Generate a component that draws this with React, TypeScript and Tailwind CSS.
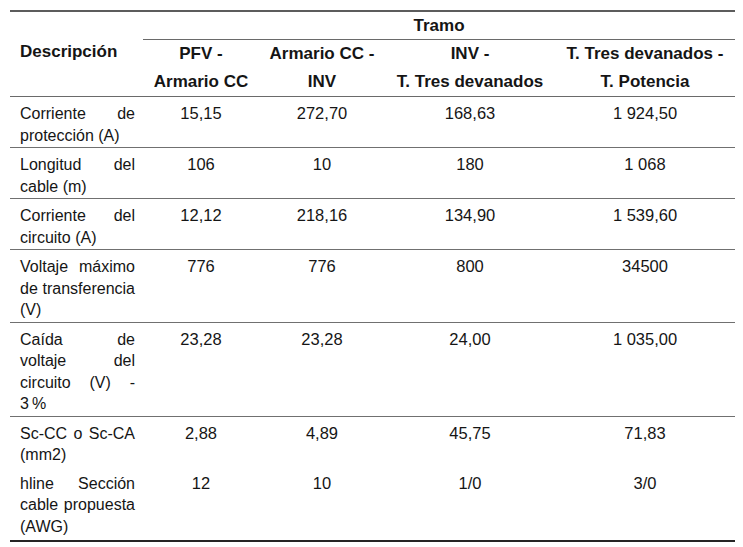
/* Tabla de cálculo de conductores por tramo */

import React from "react";

type Fila = {
    // cada línea de la descripción, separada en palabras (justificado)
    descripcion: string[][];
    valores: string[];
    sinBordeSuperior?: boolean;
};

const filas: Fila[] = [
    {
        descripcion: [["Corriente", "de"], ["protección (A)"]],
        valores: ["15,15", "272,70", "168,63", "1 924,50"],
        sinBordeSuperior: true,
    },
    {
        descripcion: [["Longitud", "del"], ["cable (m)"]],
        valores: ["106", "10", "180", "1 068"],
    },
    {
        descripcion: [["Corriente", "del"], ["circuito (A)"]],
        valores: ["12,12", "218,16", "134,90", "1 539,60"],
    },
    {
        descripcion: [["Voltaje", "máximo"], ["de", "transferencia"], ["(V)"]],
        valores: ["776", "776", "800", "34500"],
    },
    {
        descripcion: [["Caída", "de"], ["voltaje", "del"], ["circuito", "(V)", "-"], ["3\u2009%"]],
        valores: ["23,28", "23,28", "24,00", "1 035,00"],
    },
    {
        descripcion: [["Sc-CC", "o", "Sc-CA"], ["(mm2)"]],
        valores: ["2,88", "4,89", "45,75", "71,83"],
    },
    {
        descripcion: [["hline", "Sección"], ["cable", "propuesta"], ["(AWG)"]],
        valores: ["12", "10", "1/0", "3/0"],
        sinBordeSuperior: true,
    },
];

// texto de la primera columna: líneas justificadas salvo la última
const Descripcion = ({ lineas }: { lineas: string[][] }) => (
    <>
        {lineas.map((palabras, i) =>
            i < lineas.length - 1 ? (
                <div key={i} className="flex justify-between gap-x-[4px] whitespace-nowrap">
                    {palabras.map((p, j) => (
                        <span key={j}>{p}</span>
                    ))}
                </div>
            ) : (
                <div key={i} className="whitespace-nowrap">
                    {palabras.join(" ")}
                </div>
            )
        )}
    </>
);

const App = () => {
    const celda = "align-top pt-[6px] pb-[1px] leading-[21.5px]";

    return (
        <div className="min-h-screen bg-white text-[#151515] font-['Liberation_Sans',Arial,sans-serif] text-[16.5px]">
            <div className="pt-[10px] pl-[10px]">
                <table className="table-fixed border-separate border-spacing-0 w-[725px]">
                    <colgroup>
                        <col className="w-[133px]" />
                        <col className="w-[116px]" />
                        <col className="w-[126px]" />
                        <col className="w-[170px]" />
                        <col className="w-[180px]" />
                    </colgroup>
                    <thead className="font-bold text-[17px]">
                        <tr>
                            <td className="border-t-2 border-[#5c5c5c] leading-[27px] p-0"></td>
                            <td
                                colSpan={4}
                                className="border-t-2 border-t-[#5c5c5c] border-b border-b-[#6a6a6a] leading-[27px] p-0 text-center"
                            >
                                Tramo
                            </td>
                        </tr>
                        <tr>
                            <td className="align-top leading-[20px] pt-[2px] pl-[10px] text-left">
                                Descripción
                            </td>
                            <td className="leading-[28px] p-0 text-center">PFV -</td>
                            <td className="leading-[28px] p-0 text-center">Armario CC -</td>
                            <td className="leading-[28px] p-0 text-center">INV -</td>
                            <td className="leading-[28px] p-0 text-center">T. Tres devanados -</td>
                        </tr>
                        <tr>
                            <td className="border-b border-[#6a6a6a] leading-[28px] p-0"></td>
                            <td className="border-b border-[#6a6a6a] leading-[28px] p-0 text-center">Armario CC</td>
                            <td className="border-b border-[#6a6a6a] leading-[28px] p-0 text-center">INV</td>
                            <td className="border-b border-[#6a6a6a] leading-[28px] p-0 text-center">T. Tres devanados</td>
                            <td className="border-b border-[#6a6a6a] leading-[28px] p-0 text-center">T. Potencia</td>
                        </tr>
                    </thead>
                    <tbody>
                        {filas.map((fila, i) => {
                            const ultima = i === filas.length - 1;
                            const borde = fila.sinBordeSuperior ? "" : "border-t border-[#707070]";
                            const fondo = ultima ? "border-b-2 border-b-[#262626] pb-[3px]" : "";
                            return (
                                <tr key={i}>
                                    <td className={`${celda} ${borde} ${fondo} pl-[10px] pr-[8px] text-[16px]`}>
                                        <Descripcion lineas={fila.descripcion} />
                                    </td>
                                    {fila.valores.map((v, j) => (
                                        <td key={j} className={`${celda} ${borde} ${fondo} text-center`}>
                                            {v}
                                        </td>
                                    ))}
                                </tr>
                            );
                        })}
                    </tbody>
                </table>
            </div>
        </div>
    );
};

export default App;
